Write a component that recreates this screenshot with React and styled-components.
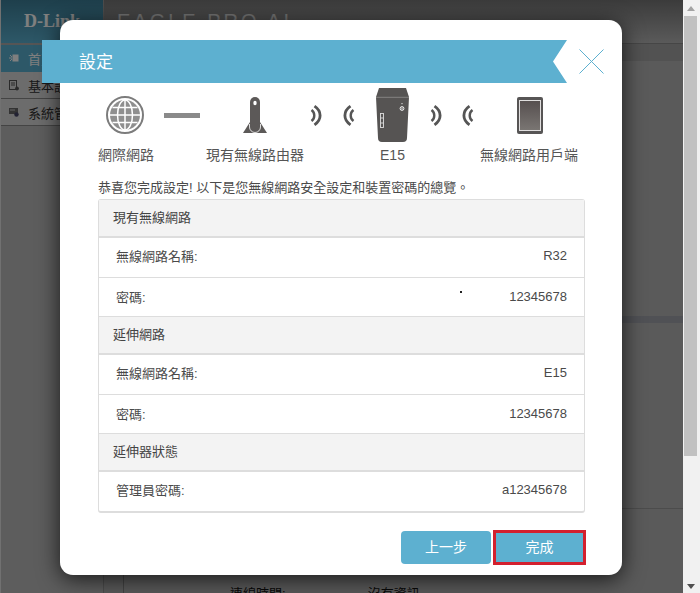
import styled, { createGlobalStyle } from 'styled-components';

const GlobalStyle = createGlobalStyle`
  html, body {
    margin: 0;
    height: 100%;
    overflow: hidden;
  }
  body {
    font-family: "Liberation Sans", "Noto Sans CJK TC", sans-serif;
    color: #444;
  }
  * {
    box-sizing: border-box;
  }
`;

const Page = styled.div`
  width: 700px;
  height: 593px;
  display: flex;
  overflow: hidden;
`;

//everything behind the dialog, dimmed by Overlay
const Backdrop = styled.div`
  width: 683px;
  flex: none;
  position: relative;
  display: flex;
  background: #b5b5b5;
`;

const Sidebar = styled.div`
  width: 104px;
  flex: none;
  background: #bbb;
  border-left: 1px solid #e2e2e2;
  border-right: 1px solid #999;
`;

const Logo = styled.div`
  height: 45px;
  background: linear-gradient(#3d7f98, #5bb0d0);
  color: #fff;
  font: bold 18px "Liberation Serif", serif;
  border-bottom: 2px solid #aaa;
  display: flex;
  align-items: center;
  justify-content: center;
`;

const SideItem = styled.div`
  height: 27px;
  display: flex;
  align-items: center;
  gap: 9px;
  padding-left: 8px;
  font-size: 13px;
  color: ${(p) => (p.$active ? '#fff' : '#333')};
  background: ${(p) => (p.$active ? '#5bb0d0' : '#d8d8d8')};
  border-bottom: 1px solid ${(p) => (p.$active ? '#5bb0d0' : '#888')};
`;

const Main = styled.div`
  flex: 1;
  display: flex;
  flex-direction: column;
`;

const Header = styled.div`
  height: 44px;
  padding: 10px 0 0 13px;
  font-size: 20px;
  letter-spacing: 3px;
  color: #e4e4e4;
  background: linear-gradient(#777, #b5b5b5);
  border-bottom: 1px solid #8c8c8c;
`;

const SubBar = styled.div`
  height: 17px;
  background: #a4a4a4;
`;

const Section = styled.div`
  height: ${(p) => p.$h}px;
  border-bottom: ${(p) => (p.$line ? '1px solid #999' : 'none')};
`;

const Band = styled.div`
  height: 7px;
  background: #a0a3ab;
`;

const Footer = styled.div`
  flex: 1;
  margin-left: 19px;
  border-left: 1px solid #888;
  display: flex;
  align-items: flex-end;
  gap: 82px;
  padding-left: 106px;
  font-size: 13px;
  color: #111;
  margin-bottom: -9px;
`;

const Scrollbar = styled.div`
  width: 17px;
  flex: none;
  background: #f1f1f1;
  display: flex;
  flex-direction: column;
  align-items: center;
  padding: 6px 2px 4px 0;
`;

const Arrow = styled.div`
  width: 0;
  height: 0;
  border-left: 4px solid transparent;
  border-right: 4px solid transparent;
  border-${(p) => (p.$down ? 'top' : 'bottom')}: 5px solid ${(p) => (p.$down ? '#505050' : '#a3a3a3')};
  margin-top: ${(p) => (p.$down ? 'auto' : '0')};
`;

const Thumb = styled.div`
  width: 13px;
  height: 440px;
  background: #c1c1c1;
  margin-top: 5px;
`;

const Overlay = styled.div`
  position: absolute;
  inset: 0;
  background: rgba(0, 0, 0, 0.5);
`;

const Modal = styled.div`
  position: absolute;
  left: 60px;
  top: 20px;
  width: 562px;
  height: 555px;
  background: #fff;
  border-radius: 13px;
  box-shadow: 0 4px 22px rgba(0, 0, 0, 0.75);
  padding: 20px 36px 0 38px;
  display: flex;
  flex-direction: column;
`;

const TitleRow = styled.div`
  display: flex;
  align-items: center;
  gap: 12px;
  margin: 0 -36px 0 -56px;
`;

const Banner = styled.div`
  width: 525px;
  height: 43px;
  flex: none;
  background: #5db0d0;
  color: #fff;
  font-size: 17px;
  padding: 0 0 3px 37px;
  display: flex;
  align-items: center;
  clip-path: polygon(0 0, 100% 0, calc(100% - 14px) 50%, 100% 100%, 0 100%);
`;

const Close = styled.svg`
  width: 25px;
  height: 25px;
  flex: none;
`;

const Steps = styled.div`
  display: grid;
  grid-template-columns: 54px 60px 86px 36px 30px 56px 32px 32px 92px;
  height: 54px;
  margin-top: 5px;
`;

const Step = styled.div`
  display: flex;
  align-items: center;
  justify-content: center;
`;

const Dash = styled.div`
  width: 36px;
  height: 5px;
  background: #8a8a8a;
`;

const Labels = styled.div`
  display: flex;
  height: 20px;
  margin-top: 4px;
`;

const Label = styled.div`
  width: ${(p) => p.$w}px;
  flex: none;
  font-size: 14px;
  line-height: 18px;
  color: #555;
  white-space: nowrap;
  text-align: ${(p) => (p.$center ? 'center' : 'left')};
`;

const Intro = styled.div`
  font-size: 13px;
  margin-top: 12px;
  height: 19px;
  line-height: 19px;
  color: #4a4a4a;
`;

const Table = styled.div`
  width: 487px;
  margin-top: 2px;
  border: 1px solid #ddd;
  border-bottom-width: 2px;
  border-radius: 3px;
  position: relative;
`;

const GroupHead = styled.div`
  height: 38px;
  background: #f3f3f3;
  border-bottom: 2px solid #ddd;
  padding: 0 0 3px 14px;
  display: flex;
  align-items: center;
  font-size: 13px;
  color: #444;
`;

const Row = styled.div`
  height: 39px;
  padding: 0 17px 4px;
  display: flex;
  align-items: center;
  justify-content: space-between;
  font-size: 13px;
  color: #4a4a4a;
`;

const SecondRow = styled(Row)`
  height: 40px;
  padding-bottom: 2px;
  border-top: 1px solid #ddd;
  border-bottom: 1px solid #ddd;
`;

const Speck = styled.span`
  position: absolute;
  left: 361px;
  top: 91px;
  width: 2px;
  height: 2px;
  background: #222;
`;

const Actions = styled.div`
  display: flex;
  justify-content: flex-end;
  align-items: center;
  gap: 2px;
  margin-top: 17px;
`;

const Button = styled.div`
  width: ${(p) => (p.$focus ? 93 : 90)}px;
  height: ${(p) => (p.$focus ? 35 : 33)}px;
  background: #5db0d0;
  color: #fff;
  font-size: 14px;
  padding-bottom: 3px;
  border-radius: ${(p) => (p.$focus ? 0 : 4)}px;
  border: ${(p) => (p.$focus ? '3px solid #d3202e' : 'none')};
  display: flex;
  align-items: center;
  justify-content: center;
`;

const HomeIcon = () => (
  <svg width="10" height="10" viewBox="0 0 10 10" fill="none" stroke="#fff" strokeWidth="1">
    <path d="M0 5h3M1 2l2 2M1 8l2-2" />
    <rect x="4" y="2" width="5" height="6" fill="#fff" />
  </svg>
);

const DocIcon = () => (
  <svg width="10" height="11" viewBox="0 0 10 11" fill="none" stroke="#555" strokeWidth="1">
    <rect x="0.5" y="0.5" width="7" height="9" />
    <path d="M2 3h4M2 5h4" />
    <circle cx="8" cy="8.5" r="1.5" fill="#555" />
  </svg>
);

const GearIcon = () => (
  <svg width="10" height="10" viewBox="0 0 10 10" fill="none">
    <rect x="0" y="1" width="9" height="6" fill="#666" />
    <path d="M1 3h5" stroke="#ccc" />
    <circle cx="7.5" cy="7.5" r="2.2" fill="#446" />
  </svg>
);

const Globe = () => (
  <svg width="38" height="38" viewBox="0 0 38 38" fill="none">
    <circle cx="19" cy="19" r="18" stroke="#7c7c7c" strokeWidth="2" />
    <circle cx="19" cy="19" r="15" fill="#8f8f8f" />
    <g stroke="#fff" strokeWidth="1.5">
      <ellipse cx="19" cy="19" rx="7.5" ry="15" />
      <path d="M19 4v30M4 19h30M6.5 11.5h25M6.5 26.5h25" />
    </g>
  </svg>
);

const Router = () => (
  <svg width="26" height="37" viewBox="0 0 26 37">
    <path d="M1 36 L8 25 H18 L25 36 Z" fill="#5c5958" />
    <path d="M8 5a5 5 0 0 1 10 0V30a5 5 0 0 1-10 0Z" fill="#5c5958" />
    <path d="M7.5 27V30a5.5 5.5 0 0 0 11 0V27" fill="none" stroke="#fff" strokeWidth="0.8" />
    <ellipse cx="13" cy="6" rx="1.7" ry="2.2" fill="#fff" />
  </svg>
);

const WaveSvg = styled.svg`
  transform: ${(p) => (p.$mirror ? 'scaleX(-1)' : 'none')};
`;

const Wave = ({ mirror }) => (
  <WaveSvg $mirror={mirror} width="12" height="21" viewBox="0 0 12 21" fill="none" stroke="#555">
    <path d="M1.500 5c2.200 1.600 2.800 3.600 2.800 5.500s-.6 3.900-2.800 5.500" strokeWidth="2.400" />
    <path d="M4.500 1.200c3.800 2.600 5.600 6 5.600 9.300S8.300 17.200 4.500 19.800" strokeWidth="2.800" />
  </WaveSvg>
);

const Extender = () => (
  <svg width="33" height="54" viewBox="0 0 33 54">
    <path d="M3 0H30L33 9 31 50Q31 54 27 54H6Q2 54 2 50L0 9Z" fill="#565453" />
    <path d="M0 9.300H33" stroke="#9a9897" strokeWidth="0.7" />
    <circle cx="26" cy="20.500" r="1.900" fill="none" stroke="#fff" strokeWidth="0.9" />
    <path d="M26 15v1.200M26 19.500v2" stroke="#fff" strokeWidth="0.9" />
    <rect x="4.500" y="25.500" width="3" height="14" fill="none" stroke="#ddd" strokeWidth="0.9" />
    <path d="M4.500 30h3M4.500 35h3" stroke="#ddd" strokeWidth="0.9" />
  </svg>
);

const Tablet = () => (
  <svg width="26" height="37" viewBox="0 0 26 37">
    <defs>
      <linearGradient id="screen" x1="0" y1="0" x2="0" y2="1">
        <stop offset="0" stopColor="#564f4f" />
        <stop offset="1" stopColor="#7a7673" />
      </linearGradient>
    </defs>
    <rect width="26" height="37" rx="2" fill="#575555" />
    <rect x="2.500" y="3.500" width="21" height="30" fill="url(#screen)" stroke="#e0dede" strokeWidth="1" />
  </svg>
);

export default function App() {
  return (
    <>
      <GlobalStyle />
      <Page>
        <Backdrop>
          <Sidebar>
            <Logo>D-Link</Logo>
            <SideItem $active><HomeIcon />首頁</SideItem>
            <SideItem><DocIcon />基本設定</SideItem>
            <SideItem><GearIcon />系統管理</SideItem>
          </Sidebar>
          <Main>
            <Header>EAGLE PRO AI</Header>
            <SubBar />
            <Section $h={255} />
            <Band />
            <Section $h={186} $line />
            <Footer>
              <span>連線時間:</span>
              <span>沒有資訊</span>
            </Footer>
          </Main>
          <Overlay />
          <Modal>
            <TitleRow>
              <Banner>設定</Banner>
              <Close viewBox="0 0 25 25" fill="none" stroke="#5db0d0" strokeWidth="1">
                <path d="M.5.5l24 24M24.500.5l-24 24" />
              </Close>
            </TitleRow>
            <Steps>
              <Step><Globe /></Step>
              <Step><Dash /></Step>
              <Step><Router /></Step>
              <Step><Wave /></Step>
              <Step><Wave mirror /></Step>
              <Step><Extender /></Step>
              <Step><Wave /></Step>
              <Step><Wave mirror /></Step>
              <Step><Tablet /></Step>
            </Steps>
            <Labels>
              <Label $w={108}>網際網路</Label>
              <Label $w={99}>現有無線路由器</Label>
              <Label $w={175} $center>E15</Label>
              <Label $w={100}>無線網路用戶端</Label>
            </Labels>
            <Intro>恭喜您完成設定! 以下是您無線網路安全設定和裝置密碼的總覽。</Intro>
            <Table>
              <GroupHead>現有無線網路</GroupHead>
              <Row><span>無線網路名稱:</span><span>R32</span></Row>
              <SecondRow><span>密碼:</span><span>12345678</span></SecondRow>
              <GroupHead>延伸網路</GroupHead>
              <Row><span>無線網路名稱:</span><span>E15</span></Row>
              <SecondRow><span>密碼:</span><span>12345678</span></SecondRow>
              <GroupHead>延伸器狀態</GroupHead>
              <Row><span>管理員密碼:</span><span>a12345678</span></Row>
              <Speck />
            </Table>
            <Actions>
              <Button>上一步</Button>
              <Button $focus>完成</Button>
            </Actions>
          </Modal>
        </Backdrop>
        <Scrollbar>
          <Arrow />
          <Thumb />
          <Arrow $down />
        </Scrollbar>
      </Page>
    </>
  );
}
